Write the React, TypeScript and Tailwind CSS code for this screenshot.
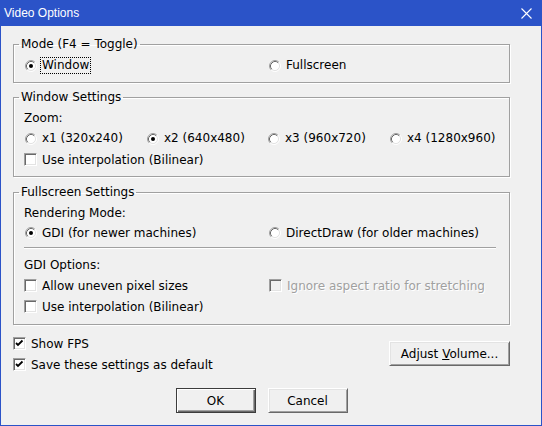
import React from 'react';

const font = { fontFamily: '"DejaVu Sans", Verdana, sans-serif' };
const titleFont = { fontFamily: '"Liberation Sans", Arial, sans-serif' };

function Radio({ checked, label, focused }: { checked?: boolean; label: string; focused?: boolean }) {
  return (
    <div className="flex items-center h-full">
      <svg width="12" height="12" viewBox="0 0 12 12" className="ml-[1px] shrink-0">
        <circle cx="6" cy="6" r="4.5" fill="#ffffff" />
        <path d="M2.11 9.89 A5.5 5.5 0 0 1 9.89 2.11" stroke="#a0a0a0" fill="none" />
        <path d="M9.89 2.11 A5.5 5.5 0 0 1 2.11 9.89" stroke="#ffffff" fill="none" />
        <path d="M2.82 9.18 A4.5 4.5 0 0 1 9.18 2.82" stroke="#696969" fill="none" />
        <path d="M9.18 2.82 A4.5 4.5 0 0 1 2.82 9.18" stroke="#e3e3e3" fill="none" />
        {checked && <circle cx="6" cy="6" r="2" fill="#000000" />}
      </svg>
      <span
        className={`ml-[4px] px-[1px] leading-[15px] ${focused ? 'outline outline-1 outline-dotted outline-black' : ''}`}
      >
        {label}
      </span>
    </div>
  );
}

function Check({ checked, label, disabled }: { checked?: boolean; label: string; disabled?: boolean }) {
  return (
    <div className="flex items-center h-full">
      <span
        className={`w-[13px] h-[13px] shrink-0 border border-t-[#a0a0a0] border-l-[#a0a0a0] border-r-white border-b-white shadow-[inset_1px_1px_0_#696969,inset_-1px_-1px_0_#e3e3e3] flex items-center justify-center ${disabled ? 'bg-[#f0f0f0]' : 'bg-white'}`}
      >
        {checked && (
          <svg width="9" height="9" viewBox="0 0 9 9">
            <path d="M1 4 L3 6 L7.5 1.5" stroke="#000" strokeWidth="1.8" fill="none" />
          </svg>
        )}
      </span>
      <span
        className={`ml-[5px] ${disabled ? 'text-[#a0a0a0] [text-shadow:1px_1px_0_#ffffff]' : ''}`}
      >
        {label}
      </span>
    </div>
  );
}

function Group({ title, children, className }: { title: string; children: React.ReactNode; className?: string }) {
  return (
    <fieldset
      className={`w-[497px] border border-[#a0a0a0] shadow-[1px_1px_0_#ffffff,inset_1px_1px_0_#ffffff] pl-[10px] ${className ?? ''}`}
    >
      <legend className="ml-[-5px] px-[2px] leading-[16px]">{title}</legend>
      {children}
    </fieldset>
  );
}

function Button({ children, width, isDefault }: { children: React.ReactNode; width: string; isDefault?: boolean }) {
  return (
    <button
      className={`${width} h-[25px] bg-[#f0f0f0] flex items-center justify-center ${
        isDefault
          ? 'border border-[#3c3c3c] shadow-[inset_1px_1px_0_#ffffff,inset_-1px_-1px_0_#696969,inset_-2px_-2px_0_#a0a0a0]'
          : 'border border-t-white border-l-white border-r-[#696969] border-b-[#696969] shadow-[inset_1px_1px_0_#e3e3e3,inset_-1px_-1px_0_#a0a0a0]'
      }`}
    >
      {children}
    </button>
  );
}

export default function App() {
  return (
    <div
      className="w-[542px] h-[426px] bg-[#f0f0f0] border-x border-b border-[#2b53c8] flex flex-col text-[12px] text-black"
      style={font}
    >
      <div
        className="h-[26px] bg-[#2b53c8] flex items-center justify-between pl-[3px] pr-[9px] text-white text-[12px]"
        style={titleFont}
      >
        <span>Video Options</span>
        <svg width="11" height="11" viewBox="0 0 11 11">
          <path d="M0.5 0.5 L10.5 10.5 M10.5 0.5 L0.5 10.5" stroke="#ffffff" strokeWidth="1.1" />
        </svg>
      </div>

      <div className="pl-[12px] flex flex-col">
        <Group title="Mode (F4 = Toggle)" className="mt-[10px] pb-[6px]">
          <div className="grid grid-cols-[244px_1fr] h-[21px] mt-[3px]">
            <Radio checked focused label="Window" />
            <Radio label="Fullscreen" />
          </div>
        </Group>

        <Group title="Window Settings" className="mt-[6px] pb-[6px]">
          <div className="h-[21px] flex items-center mt-[2px]">Zoom:</div>
          <div className="grid grid-cols-[122px_121px_122px_1fr] h-[21px]">
            <Radio label="x1 (320x240)" />
            <Radio checked label="x2 (640x480)" />
            <Radio label="x3 (960x720)" />
            <Radio label="x4 (1280x960)" />
          </div>
          <div className="h-[21px]">
            <Check label="Use interpolation (Bilinear)" />
          </div>
        </Group>

        <Group title="Fullscreen Settings" className="mt-[7px] pb-[7px]">
          <div className="h-[20px] flex items-center mt-[3px]">Rendering Mode:</div>
          <div className="grid grid-cols-[244px_1fr] h-[20px]">
            <Radio checked label="GDI (for newer machines)" />
            <Radio label="DirectDraw (for older machines)" />
          </div>
          <div className="w-[472px] h-[2px] border-t border-[#a0a0a0] border-b border-b-white mt-[4px] mb-[6px]" />
          <div className="h-[20px] flex items-center">GDI Options:</div>
          <div className="grid grid-cols-[245px_1fr] h-[21px]">
            <Check label="Allow uneven pixel sizes" />
            <Check disabled label="Ignore aspect ratio for stretching" />
          </div>
          <div className="h-[21px]">
            <Check label="Use interpolation (Bilinear)" />
          </div>
        </Group>

        <div className="w-[497px] flex justify-between mt-[8px]">
          <div className="flex flex-col">
            <div className="h-[21px]">
              <Check checked label="Show FPS" />
            </div>
            <div className="h-[21px]">
              <Check checked label="Save these settings as default" />
            </div>
          </div>
          <div className="mt-[8px]">
            <Button width="w-[121px]">
              <span>
                Adjust <span className="underline">V</span>olume...
              </span>
            </Button>
          </div>
        </div>

        <div className="w-[497px] flex justify-center gap-[12px] mt-[13px]">
          <Button width="w-[80px]" isDefault>
            OK
          </Button>
          <Button width="w-[80px]">Cancel</Button>
        </div>
      </div>
    </div>
  );
}
